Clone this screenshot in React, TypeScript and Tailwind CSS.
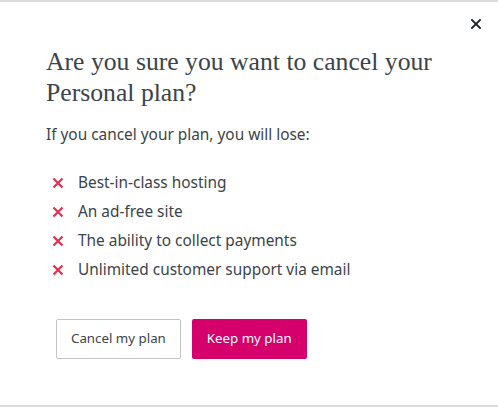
import React from 'react';

const losses = [
  'Best-in-class hosting',
  'An ad-free site',
  'The ability to collect payments',
  'Unlimited customer support via email',
];

function CrossIcon({ className }: { className?: string }) {
  return (
    <svg viewBox="0 0 12 12" className={className} fill="none" stroke="currentColor" strokeWidth={2.2}>
      <path d="M1.5 1.5l9 9M10.5 1.5l-9 9" />
    </svg>
  );
}

export default function App() {
  return (
    <div className="w-[498px] h-[407px] bg-white border-t-2 border-b-2 border-[#dcdcde] relative font-['Noto_Sans',sans-serif] text-[#3c434a]">
      <button className="absolute right-[14px] top-[14px] w-[16px] h-[16px] text-[#1d2327]">
        <svg viewBox="0 0 24 24" className="w-[16px] h-[16px]" fill="none" stroke="currentColor" strokeWidth={3}>
          <path d="M5 5l14 14M19 5L5 19" />
        </svg>
      </button>

      <div className="pl-[46px] pr-[40px] pt-[44px]">
        <h1 className="font-['Liberation_Serif',serif] text-[25.7px] leading-[31px] text-[#3c434a]">
          Are you sure you want to cancel your Personal plan?
        </h1>

        <p className="mt-[16px] text-[15.4px] leading-[22px]">If you cancel your plan, you will lose:</p>

        <ul className="mt-[26px] flex flex-col gap-[7px]">
          {losses.map((item) => (
            <li key={item} className="flex items-center gap-[14px] text-[15.4px] leading-[22px]">
              <CrossIcon className="w-[12px] h-[12px] ml-[6px] text-[#e6304f]" />
              <span>{item}</span>
            </li>
          ))}
        </ul>

        <div className="mt-[38px] ml-[10px] flex gap-[11px]">
          <button className="h-[40px] px-[14px] border border-[#c3c4c7] rounded-[2px] text-[13.3px] text-[#3c434a] bg-white">
            Cancel my plan
          </button>
          <button className="h-[40px] px-[15px] rounded-[2px] text-[13.3px] text-white bg-[#d6006c]">
            Keep my plan
          </button>
        </div>
      </div>
    </div>
  );
}
